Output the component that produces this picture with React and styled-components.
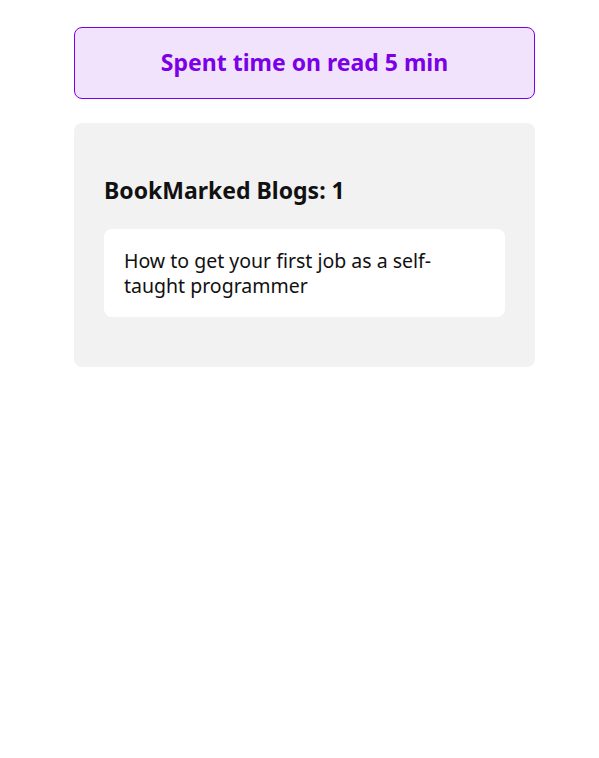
import styled, { createGlobalStyle } from "styled-components";

const GlobalStyle = createGlobalStyle`
  body {
    margin: 0;
    background: #ffffff;
    font-family: "Noto Sans", "Open Sans", sans-serif;
  }
`;

const Sidebar = styled.aside`
  width: 461px;
  margin-left: 74px;
  padding-top: 27px;
  display: flex;
  flex-direction: column;
  gap: 24px;
`;

const SpentTime = styled.div`
  height: 72px;
  box-sizing: border-box;
  border: 1px solid #7b00e8;
  border-radius: 8px;
  background: #f2e3fc;
  display: flex;
  align-items: center;
  justify-content: center;
  padding-bottom: 3px;

  h3 {
    margin: 0;
    font-size: 23px;
    font-weight: 700;
    color: #7b00e8;
  }
`;

const BookmarkPanel = styled.div`
  background: #f2f2f2;
  border-radius: 8px;
  padding: 51px 30px 50px;
  display: flex;
  flex-direction: column;
  gap: 23px;

  h2 {
    margin: 0;
    font-size: 23px;
    line-height: 32px;
    font-weight: 700;
    color: #111111;
  }
`;

const BookmarkItem = styled.div`
  background: #ffffff;
  border-radius: 8px;
  padding: 19px 20px;
  font-size: 19.5px;
  line-height: 25px;
  color: #111111;
`;

const bookmarks = ["How to get your first job as a self-taught programmer"];

const App = () => {
  return (
    <>
      <GlobalStyle />
      <Sidebar>
        <SpentTime>
          <h3>Spent time on read 5 min</h3>
        </SpentTime>
        <BookmarkPanel>
          <h2>BookMarked Blogs: {bookmarks.length}</h2>
          {bookmarks.map((title) => (
            <BookmarkItem key={title}>{title}</BookmarkItem>
          ))}
        </BookmarkPanel>
      </Sidebar>
    </>
  );
};

export default App;
